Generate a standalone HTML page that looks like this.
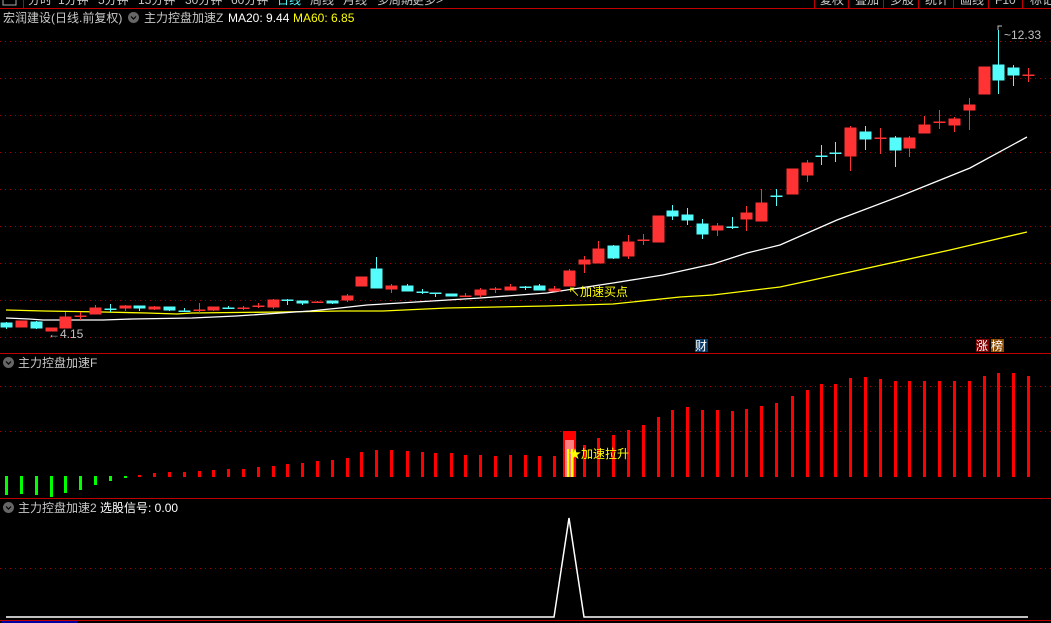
<!DOCTYPE html>
<html><head><meta charset="utf-8"><style>
body{margin:0;background:#000;width:1051px;height:623px;overflow:hidden;font-family:"Liberation Sans","Noto Sans CJK SC",sans-serif;}
svg{position:absolute;left:0;top:0}
text{font-family:"Liberation Sans","Noto Sans CJK SC",sans-serif;font-size:12px}
</style></head><body>
<svg width="1051" height="623" viewBox="0 0 1051 623">
<line x1="0" y1="8.5" x2="1051" y2="8.5" stroke="#c00000"/>
<line x1="23.5" y1="0" x2="23.5" y2="8" stroke="#c00000"/>
<rect x="3" y="-6" width="13" height="11" fill="none" stroke="#aaa"/>
<g fill="#c8c8c8"><text x="28" y="4">分时</text><text x="58" y="4">1分钟</text><text x="98" y="4">5分钟</text><text x="138" y="4">15分钟</text><text x="185" y="4">30分钟</text><text x="231" y="4">60分钟</text><text x="277" y="4" fill="#54fcfc">日线</text><text x="310" y="4">周线</text><text x="343" y="4">月线</text><text x="377" y="4">多周期</text><text x="412" y="4">更多&gt;</text></g>
<g stroke="#c00000"><line x1="814.5" y1="0" x2="814.5" y2="8"/><line x1="848.5" y1="0" x2="848.5" y2="8"/><line x1="883.5" y1="0" x2="883.5" y2="8"/><line x1="918.5" y1="0" x2="918.5" y2="8"/><line x1="953.5" y1="0" x2="953.5" y2="8"/><line x1="988.5" y1="0" x2="988.5" y2="8"/><line x1="1022.5" y1="0" x2="1022.5" y2="8"/></g>
<text x="820" y="4" fill="#c8c8c8">复权</text><text x="855" y="4" fill="#c8c8c8">叠加</text><text x="890" y="4" fill="#c8c8c8">多股</text><text x="925" y="4" fill="#c8c8c8">统计</text><text x="960" y="4" fill="#c8c8c8">画线</text><text x="995" y="4" fill="#c8c8c8">F10</text><text x="1030" y="4" fill="#c8c8c8">标记</text>
<text x="3" y="22" fill="#c8c8c8">宏润建设(日线.前复权)</text>
<circle cx="133.5" cy="17.5" r="5.5" fill="#666"/><path d="M131 16.5l2.5 2.5 2.5-2.5" stroke="#000" fill="none" stroke-width="1.2"/>
<text x="144" y="22" fill="#c8c8c8">主力控盘加速Z</text>
<text x="228" y="22" fill="#fff">MA20: 9.44</text>
<text x="293" y="22" fill="#ffff00">MA60: 6.85</text>
<g stroke="#a00000" stroke-dasharray="1,4">
<line x1="0" y1="41.5" x2="1051" y2="41.5"/><line x1="0" y1="78.5" x2="1051" y2="78.5"/><line x1="0" y1="115.5" x2="1051" y2="115.5"/><line x1="0" y1="152.5" x2="1051" y2="152.5"/><line x1="0" y1="189.5" x2="1051" y2="189.5"/><line x1="0" y1="226.5" x2="1051" y2="226.5"/><line x1="0" y1="263.5" x2="1051" y2="263.5"/><line x1="0" y1="300.5" x2="1051" y2="300.5"/><line x1="0" y1="337.5" x2="1051" y2="337.5"/>
<line x1="0" y1="386.5" x2="1051" y2="386.5"/><line x1="0" y1="431.5" x2="1051" y2="431.5"/>
<line x1="0" y1="568.5" x2="1051" y2="568.5"/>
</g>
<line x1="0" y1="353.5" x2="1051" y2="353.5" stroke="#c00000"/>
<line x1="0" y1="498.5" x2="1051" y2="498.5" stroke="#c00000"/>
<polyline fill="none" stroke="#ffff00" stroke-width="1.3" points="6,310 44,311 103,312 147,313 177,314 192,313 280,312 340,311 383,311 447,308 547,306 613,304 680,297 713,295 780,287 850,272 950,250 1027,232"/>
<polyline fill="none" stroke="#fff" stroke-width="1.3" points="6,318 29,319 43,320 103,320 132,319 192,318 236,316 251,315 295,312 310,311 340,308 367,305 400,303 480,298 547,293 613,283 663,275 713,264 747,253 780,245 837,220 903,195 970,168 1027,137"/>
<g stroke-width="1">
<g fill="#54fcfc" stroke="#54fcfc">
<line x1="6.5" y1="322" x2="6.5" y2="329"/><rect x="1" y="323" width="11" height="4"/>
<line x1="36.5" y1="321" x2="36.5" y2="329"/><rect x="31" y="322" width="11" height="6"/>
<line x1="110.5" y1="304" x2="110.5" y2="312"/><rect x="105" y="309" width="11" height="0.5"/>
<line x1="139.5" y1="306" x2="139.5" y2="311"/><rect x="134" y="306" width="11" height="2"/>
<line x1="169.5" y1="307" x2="169.5" y2="311"/><rect x="164" y="307" width="11" height="3"/>
<line x1="184.5" y1="308" x2="184.5" y2="312"/><rect x="179" y="311" width="11" height="0.5"/>
<line x1="228.5" y1="306" x2="228.5" y2="309"/><rect x="223" y="308" width="11" height="0.5"/>
<line x1="287.5" y1="299" x2="287.5" y2="305"/><rect x="282" y="300" width="11" height="0.5"/>
<line x1="302.5" y1="301" x2="302.5" y2="305"/><rect x="297" y="301" width="11" height="2"/>
<line x1="332.5" y1="301" x2="332.5" y2="304"/><rect x="327" y="301" width="11" height="2"/>
<line x1="376.5" y1="257" x2="376.5" y2="288"/><rect x="371" y="269" width="11" height="19"/>
<line x1="407.5" y1="284" x2="407.5" y2="291"/><rect x="402" y="286" width="11" height="5"/>
<line x1="422.5" y1="289" x2="422.5" y2="294"/><rect x="417" y="292" width="11" height="0.5"/>
<line x1="435.5" y1="293" x2="435.5" y2="297"/><rect x="430" y="293" width="11" height="0.5"/>
<rect x="446" y="294" width="11" height="2"/>
<line x1="525.5" y1="286" x2="525.5" y2="290"/><rect x="520" y="287" width="11" height="0.5"/>
<line x1="539.5" y1="284" x2="539.5" y2="290"/><rect x="534" y="286" width="11" height="4"/>
<line x1="613.5" y1="245" x2="613.5" y2="259"/><rect x="608" y="246" width="11" height="12"/>
<line x1="672.5" y1="205" x2="672.5" y2="220"/><rect x="667" y="211" width="11" height="5"/>
<line x1="687.5" y1="208" x2="687.5" y2="225"/><rect x="682" y="215" width="11" height="5"/>
<line x1="702.5" y1="219" x2="702.5" y2="239"/><rect x="697" y="224" width="11" height="10"/>
<line x1="732.5" y1="217" x2="732.5" y2="229"/><rect x="727" y="227" width="11" height="0.5"/>
<line x1="776.5" y1="189" x2="776.5" y2="206"/><rect x="771" y="196" width="11" height="0.5"/>
<line x1="821.5" y1="145" x2="821.5" y2="165"/><rect x="816" y="156" width="11" height="0.5"/>
<line x1="835.5" y1="142" x2="835.5" y2="162"/><rect x="830" y="153" width="11" height="0.5"/>
<line x1="865.5" y1="126" x2="865.5" y2="150"/><rect x="860" y="132" width="11" height="7"/>
<line x1="895.5" y1="136" x2="895.5" y2="167"/><rect x="890" y="138" width="11" height="12"/>
<line x1="998.5" y1="30" x2="998.5" y2="94"/><rect x="993" y="65" width="11" height="15"/>
<line x1="1013.5" y1="65" x2="1013.5" y2="86"/><rect x="1008" y="68" width="11" height="7"/>
</g>
<g fill="#ff3333" stroke="#ff3333">
<rect x="16" y="321" width="11" height="6"/>
<rect x="46" y="328" width="11" height="3"/>
<line x1="65.5" y1="312" x2="65.5" y2="328"/><rect x="60" y="317" width="11" height="11"/>
<line x1="80.5" y1="312" x2="80.5" y2="320"/><rect x="75" y="316" width="11" height="0.5"/>
<line x1="95.5" y1="305" x2="95.5" y2="314"/><rect x="90" y="308" width="11" height="6"/>
<line x1="125.5" y1="305" x2="125.5" y2="311"/><rect x="120" y="306" width="11" height="2"/>
<line x1="154.5" y1="306" x2="154.5" y2="310"/><rect x="149" y="307" width="11" height="2"/>
<line x1="199.5" y1="303" x2="199.5" y2="313"/><rect x="194" y="310" width="11" height="0.5"/>
<line x1="213.5" y1="307" x2="213.5" y2="311"/><rect x="208" y="307" width="11" height="3"/>
<line x1="243.5" y1="306" x2="243.5" y2="310"/><rect x="238" y="308" width="11" height="0.5"/>
<line x1="258.5" y1="303" x2="258.5" y2="308"/><rect x="253" y="306" width="11" height="0.5"/>
<line x1="273.5" y1="299" x2="273.5" y2="309"/><rect x="268" y="300" width="11" height="7"/>
<line x1="317.5" y1="301" x2="317.5" y2="303"/><rect x="312" y="302" width="11" height="0.5"/>
<line x1="347.5" y1="294" x2="347.5" y2="302"/><rect x="342" y="296" width="11" height="4"/>
<rect x="356" y="277" width="11" height="9"/>
<line x1="391.5" y1="284" x2="391.5" y2="293"/><rect x="386" y="286" width="11" height="3"/>
<line x1="465.5" y1="293" x2="465.5" y2="297"/><rect x="460" y="296" width="11" height="0.5"/>
<line x1="480.5" y1="288" x2="480.5" y2="297"/><rect x="475" y="290" width="11" height="5"/>
<line x1="495.5" y1="287" x2="495.5" y2="293"/><rect x="490" y="289" width="11" height="0.5"/>
<line x1="510.5" y1="284" x2="510.5" y2="290"/><rect x="505" y="287" width="11" height="3"/>
<line x1="554.5" y1="286" x2="554.5" y2="291"/><rect x="549" y="289" width="11" height="2"/>
<line x1="569.5" y1="269" x2="569.5" y2="286"/><rect x="564" y="271" width="11" height="15"/>
<line x1="584.5" y1="256" x2="584.5" y2="273"/><rect x="579" y="260" width="11" height="4"/>
<line x1="598.5" y1="241" x2="598.5" y2="263"/><rect x="593" y="249" width="11" height="14"/>
<line x1="628.5" y1="235" x2="628.5" y2="259"/><rect x="623" y="242" width="11" height="14"/>
<line x1="643.5" y1="234" x2="643.5" y2="245"/><rect x="638" y="240" width="11" height="0.5"/>
<rect x="653" y="216" width="11" height="26"/>
<line x1="717.5" y1="223" x2="717.5" y2="236"/><rect x="712" y="226" width="11" height="4"/>
<line x1="746.5" y1="206" x2="746.5" y2="231"/><rect x="741" y="213" width="11" height="6"/>
<line x1="761.5" y1="189" x2="761.5" y2="221"/><rect x="756" y="203" width="11" height="18"/>
<rect x="787" y="169" width="11" height="25"/>
<line x1="807.5" y1="160" x2="807.5" y2="182"/><rect x="802" y="163" width="11" height="12"/>
<line x1="850.5" y1="126" x2="850.5" y2="171"/><rect x="845" y="128" width="11" height="28"/>
<line x1="880.5" y1="128" x2="880.5" y2="154"/><rect x="875" y="138" width="11" height="0.5"/>
<line x1="909.5" y1="136" x2="909.5" y2="157"/><rect x="904" y="138" width="11" height="10"/>
<line x1="924.5" y1="116" x2="924.5" y2="133"/><rect x="919" y="125" width="11" height="8"/>
<line x1="939.5" y1="110" x2="939.5" y2="129"/><rect x="934" y="122" width="11" height="0.5"/>
<line x1="954.5" y1="117" x2="954.5" y2="132"/><rect x="949" y="119" width="11" height="6"/>
<line x1="969.5" y1="98" x2="969.5" y2="130"/><rect x="964" y="105" width="11" height="5"/>
<rect x="979" y="67" width="11" height="27"/>
<line x1="1028.5" y1="68" x2="1028.5" y2="82"/><rect x="1023" y="75" width="11" height="0.5"/>
</g></g>
<text x="48" y="338" fill="#c0c0c0">←4.15</text>
<path d="M998 30v-4h4" stroke="#c0c0c0" fill="none"/>
<text x="1004" y="39" fill="#c0c0c0">~12.33</text>
<text x="568" y="296" fill="#ffff00">↖加速买点</text>
<rect x="695" y="339" width="13" height="13" fill="#0a3a66"/><text x="695" y="350" fill="#fff">财</text>
<rect x="976" y="339" width="13" height="13" fill="#7a0000"/><text x="976" y="350" fill="#fff">涨</text>
<rect x="991" y="339" width="13" height="13" fill="#8a4a00"/><text x="991" y="350" fill="#fff">榜</text>
<circle cx="8.5" cy="362.5" r="5.5" fill="#666"/><path d="M6 361.5l2.5 2.5 2.5-2.5" stroke="#000" fill="none" stroke-width="1.2"/>
<text x="18" y="367" fill="#c8c8c8">主力控盘加速F</text>
<g fill="#00ff00">
<rect x="5" y="476" width="3" height="19"/><rect x="20" y="476" width="3" height="18"/><rect x="35" y="476" width="3" height="19"/><rect x="50" y="476" width="3" height="21"/><rect x="64" y="476" width="3" height="17"/><rect x="79" y="476" width="3" height="14"/><rect x="94" y="476" width="3" height="9"/><rect x="109" y="476" width="3" height="5"/><rect x="124" y="476" width="3" height="2"/>
</g>
<g fill="#ff0000">
<rect x="138" y="475" width="3" height="2"/><rect x="153" y="473" width="3" height="4"/><rect x="168" y="472" width="3" height="5"/><rect x="183" y="472" width="3" height="5"/><rect x="198" y="471" width="3" height="6"/><rect x="212" y="470" width="3" height="7"/><rect x="227" y="469" width="3" height="8"/><rect x="242" y="469" width="3" height="8"/><rect x="257" y="467" width="3" height="10"/><rect x="272" y="466" width="3" height="11"/><rect x="286" y="464" width="3" height="13"/><rect x="301" y="463" width="3" height="14"/><rect x="316" y="461" width="3" height="16"/><rect x="331" y="460" width="3" height="17"/><rect x="346" y="458" width="3" height="19"/><rect x="360" y="452" width="3" height="25"/><rect x="375" y="450" width="3" height="27"/><rect x="390" y="450" width="3" height="27"/><rect x="406" y="451" width="3" height="26"/><rect x="421" y="452" width="3" height="25"/><rect x="434" y="453" width="3" height="24"/><rect x="450" y="453" width="3" height="24"/><rect x="464" y="455" width="3" height="22"/><rect x="479" y="455" width="3" height="22"/><rect x="494" y="456" width="3" height="21"/><rect x="509" y="455" width="3" height="22"/><rect x="524" y="455" width="3" height="22"/><rect x="538" y="456" width="3" height="21"/><rect x="553" y="456" width="3" height="21"/>
<rect x="563" y="431" width="13" height="46"/>
<rect x="583" y="445" width="3" height="32"/><rect x="597" y="438" width="3" height="39"/><rect x="612" y="435" width="3" height="42"/><rect x="627" y="430" width="3" height="47"/><rect x="642" y="425" width="3" height="52"/><rect x="657" y="417" width="3" height="60"/><rect x="671" y="410" width="3" height="67"/><rect x="686" y="407" width="3" height="70"/><rect x="701" y="410" width="3" height="67"/><rect x="716" y="410" width="3" height="67"/><rect x="731" y="411" width="3" height="66"/><rect x="745" y="409" width="3" height="68"/><rect x="760" y="406" width="3" height="71"/><rect x="775" y="403" width="3" height="74"/><rect x="791" y="396" width="3" height="81"/><rect x="806" y="390" width="3" height="87"/><rect x="820" y="384" width="3" height="93"/><rect x="834" y="384" width="3" height="93"/><rect x="849" y="378" width="3" height="99"/><rect x="864" y="377" width="3" height="100"/><rect x="879" y="379" width="3" height="98"/><rect x="894" y="381" width="3" height="96"/><rect x="908" y="381" width="3" height="96"/><rect x="923" y="381" width="3" height="96"/><rect x="938" y="381" width="3" height="96"/><rect x="953" y="381" width="3" height="96"/><rect x="968" y="381" width="3" height="96"/><rect x="983" y="376" width="3" height="101"/><rect x="997" y="373" width="3" height="104"/><rect x="1012" y="373" width="3" height="104"/><rect x="1027" y="376" width="3" height="101"/>
</g>
<rect x="565" y="440" width="9" height="37" fill="#ff8080"/>
<rect x="567" y="449" width="2" height="28" fill="#ffff00"/><rect x="571" y="449" width="2" height="28" fill="#ffff00"/>
<text x="569" y="458" fill="#ffff00">★加速拉升</text>
<circle cx="8.5" cy="507.5" r="5.5" fill="#666"/><path d="M6 506.5l2.5 2.5 2.5-2.5" stroke="#000" fill="none" stroke-width="1.2"/>
<text x="18" y="512" fill="#c8c8c8">主力控盘加速2 <tspan fill="#fff">选股信号: 0.00</tspan></text>
<polyline fill="none" stroke="#fff" stroke-width="1.5" points="6,617 554,617 569,518 584,617 1028,617"/>
<line x1="0" y1="620.5" x2="1051" y2="620.5" stroke="#c00000"/>
<rect x="1" y="621" width="76" height="2" fill="#0000a0"/>
</svg>
</body></html>
